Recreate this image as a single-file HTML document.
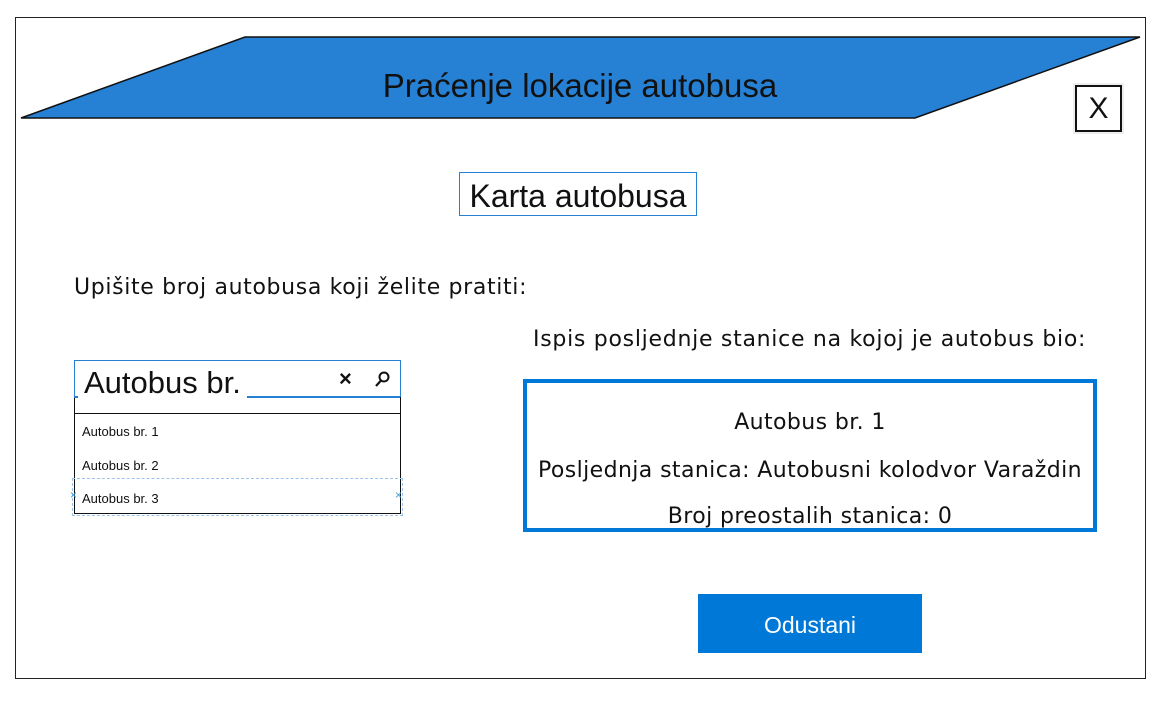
<!DOCTYPE html>
<html><head><meta charset="utf-8"><style>
body{margin:0;width:1165px;height:703px;background:#fff;position:relative;overflow:hidden;font-family:"Liberation Sans","DejaVu Sans",sans-serif;color:#111}
.a{position:absolute;white-space:nowrap}
.c{text-align:center}
.o{font-family:"DejaVu Sans",sans-serif;font-size:22px;letter-spacing:0.4px}
</style></head><body>
<div class="a" style="left:15px;top:17px;width:1129px;height:660px;border:1px solid #222"></div>
<svg class="a" style="left:0;top:0" width="1165" height="140">
<polygon points="245,37 1140,37 915,118 21,118" fill="#2680d4" stroke="#111" stroke-width="1.5"/>
</svg>
<div class="a c" style="left:280px;top:67px;width:600px;font-size:33px;color:#111">Praćenje lokacije autobusa</div>
<div class="a c" style="left:1075px;top:85px;width:43px;height:43px;border:2px solid #111;background:#fff;font-size:30px;line-height:43px;box-shadow:0 0 0 2px #eee">X</div>
<div class="a c" style="left:459px;top:172px;width:236px;height:42px;border:1px solid #2680d4;font-size:32px;line-height:46px">Karta autobusa</div>
<div class="a o" style="left:74px;top:275px;letter-spacing:0.65px">Upišite broj autobusa koji želite pratiti:</div>
<div class="a o" style="left:533px;top:327px;letter-spacing:0.72px">Ispis posljednje stanice na kojoj je autobus bio:</div>
<div class="a" style="left:74px;top:380px;width:325px;height:133px;border:1px solid #111;border-top:none"></div>
<div class="a" style="left:74px;top:413px;width:326px;height:1px;background:#111"></div>
<div class="a" style="left:74px;top:360px;width:325px;height:36px;border:1px solid #2680d4;border-bottom:none;background:#fff"></div>
<div class="a" style="left:247px;top:396px;width:153px;height:2px;background:#2680d4"></div>
<div class="a" style="left:74px;top:396px;width:4px;height:2px;background:#2680d4"></div>
<div class="a" style="left:84px;top:365px;font-size:31px">Autobus br.</div>
<div class="a" style="left:339px;top:366px;font-size:22px;font-weight:bold">×</div>
<svg class="a" style="left:374px;top:370px" width="18" height="18"><circle cx="10" cy="7" r="4.5" fill="none" stroke="#111" stroke-width="2"/><line x1="7" y1="10.5" x2="2" y2="16" stroke="#111" stroke-width="2.2"/></svg>
<div class="a" style="left:82px;top:424px;font-size:13px">Autobus br. 1</div>
<div class="a" style="left:82px;top:458px;font-size:13px">Autobus br. 2</div>
<div class="a" style="left:82px;top:491px;font-size:13px">Autobus br. 3</div>
<div class="a" style="left:72px;top:478px;width:329px;height:36px;border:1px dashed #9cc3ea"></div>
<div class="a" style="left:70px;top:488px;font-size:12px;color:#3aa0e0">×</div>
<div class="a" style="left:395px;top:488px;font-size:12px;color:#3aa0e0">×</div>
<div class="a" style="left:523px;top:379px;width:566px;height:145px;border:4px solid #0078d7"></div>
<div class="a c o" style="left:523px;top:410px;width:574px">Autobus br. 1</div>
<div class="a c o" style="left:523px;top:458px;width:574px">Posljednja stanica: Autobusni kolodvor Varaždin</div>
<div class="a c o" style="left:523px;top:504px;width:574px">Broj preostalih stanica: 0</div>
<div class="a c" style="left:698px;top:594px;width:224px;height:59px;background:#0078d7;color:#fff;font-size:23px;line-height:62px">Odustani</div>
</body></html>
